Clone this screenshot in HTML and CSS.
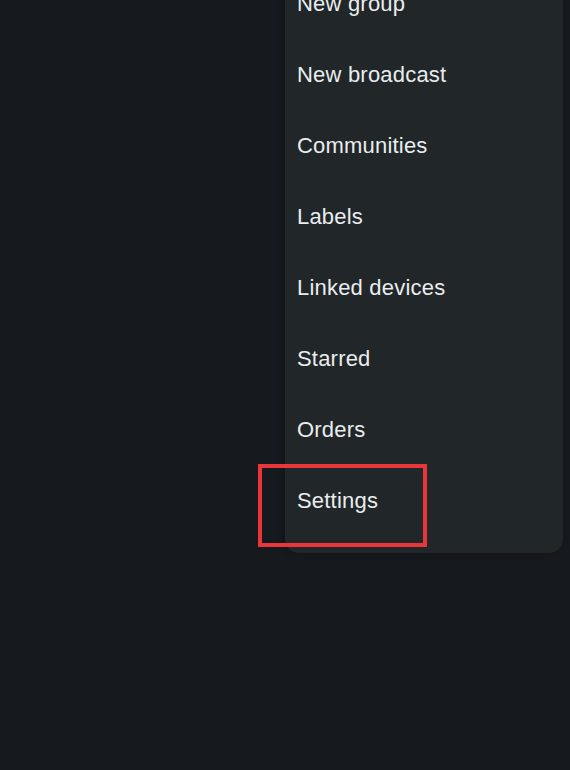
FILE: index.html
```html
<!DOCTYPE html>
<html lang="en">
<head>
<meta charset="UTF-8" />
<meta name="viewport" content="width=device-width, initial-scale=1" />
<title>Menu</title>
<link rel="stylesheet" href="styles.css">
</head>
<body>

<div class="screen">
  <ul class="menu">
    <li class="menu-item">New group</li>
    <li class="menu-item">New broadcast</li>
    <li class="menu-item">Communities</li>
    <li class="menu-item">Labels</li>
    <li class="menu-item">Linked devices</li>
    <li class="menu-item">Starred</li>
    <li class="menu-item">Orders</li>
    <li class="menu-item highlight">Settings</li>
  </ul>
</div>

</body>
</html>
```

FILE: styles.css
```css
body {
  margin: 0;
  background: #161a1e;
  font-family: 'Liberation Sans', Arial, Helvetica, sans-serif;
  color: #e9edef;
  height: 770px;
  overflow: hidden;
}

.screen {
  padding-left: 285px;
}

.menu {
  list-style: none;
  margin: -32px 0 0;
  padding: 0 0 17px;
  width: 278px;
  background: #212629;
  border-radius: 0 0 14px 14px;
  box-shadow: -2px 0 6px rgba(0, 0, 0, 0.25);
}

.menu-item {
  height: 71px;
  display: flex;
  align-items: center;
  padding-left: 12px;
  font-size: 22px;
  letter-spacing: 0.2px;
}

.highlight {
  position: relative;
}

/* red annotation box */
.highlight::after {
  content: "";
  position: absolute;
  left: -27px;
  top: -1px;
  width: 161px;
  height: 75px;
  border: 4px solid #e8363b;
}
```
